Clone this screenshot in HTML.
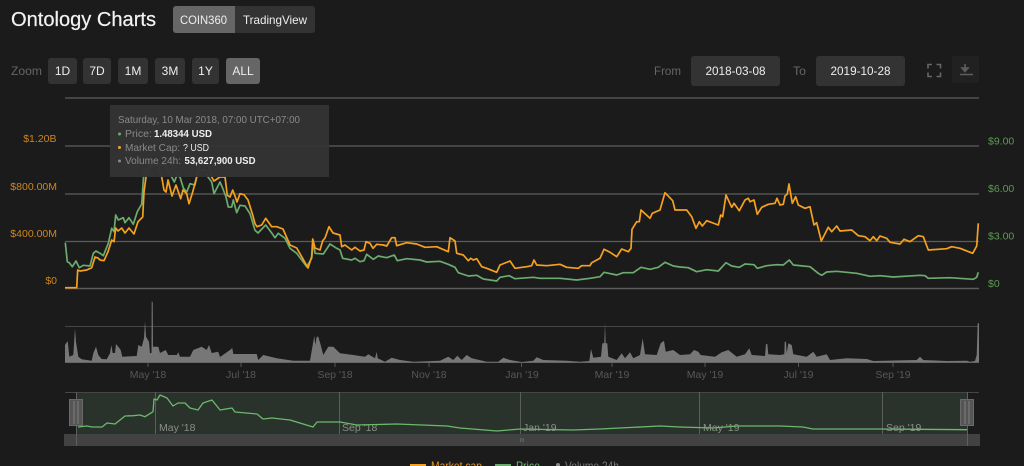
<!DOCTYPE html>
<html><head><meta charset="utf-8"><style>
html,body{margin:0;padding:0;background:#1b1b1b;width:1024px;height:466px;overflow:hidden}
svg{display:block;font-family:"Liberation Sans",sans-serif;filter:blur(.3px)}
</style></head><body>
<svg width="1024" height="466" viewBox="0 0 1024 466">
<rect width="1024" height="466" fill="#1b1b1b"/>
<text x="11" y="26" font-size="20" fill="#f2f2f2" stroke="#f2f2f2" stroke-width=".2" textLength="145" lengthAdjust="spacingAndGlyphs">Ontology Charts</text>
<rect x="173" y="6" width="142" height="27" rx="3" fill="#333"/>
<path d="M176 6h59v27h-59a3 3 0 0 1-3-3v-21a3 3 0 0 1 3-3z" fill="#666"/>
<g font-size="12" fill="#eee">
<text x="180" y="24" textLength="47" lengthAdjust="spacingAndGlyphs">COIN360</text>
<text x="243" y="24" textLength="64" lengthAdjust="spacingAndGlyphs">TradingView</text>
</g>
<text x="11" y="75" font-size="12" fill="#666" textLength="31" lengthAdjust="spacingAndGlyphs">Zoom</text>
<g fill="#333">
<rect x="48" y="58" width="29" height="26" rx="3"/><rect x="83" y="58" width="28" height="26" rx="3"/>
<rect x="118" y="58" width="30" height="26" rx="3"/><rect x="155" y="58" width="30" height="26" rx="3"/>
<rect x="192" y="58" width="27" height="26" rx="3"/><rect x="226" y="58" width="34" height="26" rx="3" fill="#666"/>
</g>
<g font-size="12" fill="#eee" text-anchor="middle">
<text x="62.500" y="75">1D</text><text x="97" y="75">7D</text><text x="133" y="75">1M</text>
<text x="170" y="75">3M</text><text x="205.500" y="75">1Y</text><text x="243" y="75">ALL</text>
</g>
<text x="654" y="75" font-size="12" fill="#666" textLength="27" lengthAdjust="spacingAndGlyphs">From</text>
<rect x="691" y="56" width="89" height="30" rx="3" fill="#333"/>
<text x="705.500" y="75" font-size="12" fill="#eee" textLength="60" lengthAdjust="spacingAndGlyphs">2018-03-08</text>
<text x="793" y="75" font-size="12" fill="#666" textLength="13" lengthAdjust="spacingAndGlyphs">To</text>
<rect x="816" y="56" width="89" height="30" rx="3" fill="#333"/>
<text x="830.500" y="75" font-size="12" fill="#eee" textLength="60" lengthAdjust="spacingAndGlyphs">2019-10-28</text>
<path d="M928 68.500v-4h4M936.500 64.500h4v4M928 72.500v4h4M936.500 76.500h4v-4" fill="none" stroke="#666" stroke-width="1.600"/>
<rect x="952" y="56" width="27" height="27" rx="2" fill="#212121"/>
<path d="M965 64v5.500M962 68h6l-3 3.500zM960 74.500h13" fill="#5c5c5c" stroke="#5c5c5c" stroke-width="1.600"/>

<g stroke="#5c5c5c" stroke-width="1.200">
<path d="M65 98H979M65 146H979M65 194H979M65 241.500H979"/>
</g>
<path d="M65 288.500H979" stroke="#5c5c5c" stroke-width="1.600"/>

<g font-size="10.500" fill="#cf851f" text-anchor="end">
<text x="56.500" y="142">$1.20B</text><text x="57" y="190">$800.00M</text>
<text x="57" y="237">$400.00M</text><text x="57" y="284">$0</text>
</g>
<g font-size="10.500" fill="#5a9c50">
<text x="988" y="144.500">$9.00</text><text x="988" y="192">$6.00</text>
<text x="988" y="239.500">$3.00</text><text x="988" y="287">$0</text>
</g>

<polyline fill="none" stroke="#6cab6e" stroke-width="1.700" stroke-linejoin="round" points="65.300,242.700 67.300,261.700 69.300,262.700 72.300,266.700 76,261 79.300,267.700 83.300,265.300 90,266 93.300,253.300 96,251 100,253.300 103.300,255.700 108.300,243.300 111.700,228.300 114,231.700 115.700,215 118.300,220 123.300,217.700 125,222.700 129,217.700 133.300,224.300 137.300,211.700 141.700,204 143.300,180 144.300,170 155,165 165,165 171.700,177 174.300,182 177,175 180,177 183.300,188 186.700,192 190,183.700 195,185 198,170 205,170 208,177 211.700,182 214,193.700 220,182 223,189 226,197 228.300,207 231.700,207 233.300,200 236.700,212.700 240,205.300 245,206 250,213.700 255,230.300 258,233 265.700,225 271.700,233 275,237.700 278.300,233.300 285,238.300 290,248.300 296.700,253.300 306.700,266.700 311.700,258.300 313.300,240.700 315,253.300 323.300,254 330,244 336.700,248.300 340,250 342.700,258.300 351.700,260 355,258.300 360,261.700 364,260.700 366.700,254.300 373.300,259.300 378.300,256 386.700,257.700 394.300,255 397.300,260.700 406.700,258.700 420,260 426.700,262 440,261.300 448.300,264.300 455,267.300 458.300,272.700 468.300,276 476.700,275.300 483.300,279 496.700,281 500,277.300 509.300,275.700 515,278.700 533.300,277.300 540,278.300 560,278.300 576.700,280 590,278.300 600,276.700 604,272.300 616.700,275 623.300,272.700 633.300,272.700 641,267.300 650,269.300 658.300,267.300 665,262.300 673.300,266 680,267 688.300,267.700 696.700,271.700 706.700,269.700 718.300,271 726,262.700 731.700,266 739.300,267.300 745,264 754,264.700 757.300,268.300 766.700,265.700 776.700,264.700 783.300,265 789.300,260 793.300,265 810,266.700 818.300,273.300 821.700,275.300 826.700,272 836.700,271.300 856.700,273.300 870,276.300 880,275.700 893.300,277 920,275.300 925,275.700 928.300,278.300 950,277.700 973.300,279.300 976.700,277.300 978.300,272.300"/>
<polyline fill="none" stroke="#f5a11f" stroke-width="1.700" stroke-linejoin="round" points="65,287.700 76.700,287.700 77.700,270 80,271 86.700,270 91.700,267.700 95,257 98,258 100,260 104,260.700 108,251.700 111.700,240 114,241.700 115.700,228 118,231 121.700,228 125,233 129,228 134,234 138,221.700 142.700,217 144,192 146,177 150,165 158,165 161.700,177 164,190 166,192 168,180 172,196 176,185 180.700,198.700 183,190 186.700,193.700 189,203.700 192.700,192 196.700,177 200,165 208,165 211.700,177 214,181 220,177 225,177 227.300,195.300 230,197 232.700,190 235,196 237,202 240,193.700 244,194.700 248,200 252.700,215 255,223.700 257,226.700 261.700,225 265.700,218.300 271.700,226.700 276.700,226.700 283,229 290,245 296.700,248 301.700,256.700 308,268 311.700,256.700 312.700,239 315,248 320,250 322.700,240.700 325,238 329,226.700 333,233 340,235 341.700,246.700 345,245 351.700,250 355,247.300 360,251 364,250 366,241.700 370,243.300 373,248.300 376.700,244.300 383.300,245 386.700,246 391.700,237.700 395,237.700 396.700,245.700 406.700,242.700 416.700,244 425,247.300 436.700,246.700 448.300,251.700 450,237.700 455,241 456.700,253.300 463.300,255 468.300,260.700 470.700,258.300 473.300,260 476.700,258.700 481.700,266.700 486.700,268.300 496.700,272.300 500,265 510,261 515,268.300 526.700,266.700 531.700,265.700 534,260 536.700,265 546.700,265.700 560,264.300 566.700,267.300 578.300,268.300 581.700,265.700 590,265.700 591.700,262.700 600,258.300 604,249.300 610,252.300 616.700,256.700 621.700,249 628.300,251.700 631,248.300 632,229.300 636.700,221.700 639.300,221.700 641,210 650,218.300 652.300,213.300 660,210 665,192.700 672.700,200.700 675,210 680,210 686.700,210 691.700,216.700 696,228.300 699.300,221.700 702.300,226 706.700,220.700 718.300,225 720.700,215 722.700,216.700 726,195 731.700,207.300 734,203.300 739.300,210.700 745,200 748.300,198.300 750,201.700 754,200 757.300,214.300 761.700,207.300 768.300,204.300 775,203.300 777,198.300 780,205 783.300,204.300 785,196 787.300,194 789,184 792.300,203.300 795.700,196.700 798.300,205 805,208.300 810,206.700 814,225 816.700,222.700 821.300,241 828.300,227.300 831.700,231.700 836.700,226 840,231 851.700,230 858.300,235.700 865,236.700 870,240.700 873.300,236.700 876.700,240.700 880,236 886.700,238.300 890,242.300 900,244 904,239.300 910,241.700 918.300,235.700 923.300,236.700 928.300,250 946.700,248.700 951.700,246.700 960,248.300 972.700,253.300 976.700,246 978.300,223.300"/>

<rect x="110" y="105" width="219" height="72" fill="#333" fill-opacity=".98"/>
<g font-size="10.500">
<text x="118" y="123" fill="#8a8a8a" textLength="182" lengthAdjust="spacingAndGlyphs">Saturday, 10 Mar 2018, 07:00 UTC+07:00</text>
<circle cx="119.500" cy="134" r="1.500" fill="#6cab6e"/><text x="125" y="137" fill="#8a8a8a">Price:</text>
<text x="154" y="137" fill="#eee" font-weight="bold" textLength="58" lengthAdjust="spacingAndGlyphs">1.48344 USD</text>
<circle cx="119.500" cy="147.500" r="1.500" fill="#f5a11f"/><text x="125" y="151" fill="#8a8a8a" textLength="55" lengthAdjust="spacingAndGlyphs">Market Cap:</text>
<text x="183" y="151" fill="#eee" textLength="26" lengthAdjust="spacingAndGlyphs">? USD</text>
<circle cx="119.500" cy="161" r="1.500" fill="#888"/><text x="125" y="164" fill="#8a8a8a" textLength="56" lengthAdjust="spacingAndGlyphs">Volume 24h:</text>
<text x="184.500" y="164" fill="#eee" font-weight="bold" textLength="71" lengthAdjust="spacingAndGlyphs">53,627,900 USD</text>
</g>

<path d="M65 326.500H979" stroke="#464646" stroke-width="1"/>
<polygon fill="#777" points="65,362.700 65,345 67.700,341 69.300,356.700 73.300,355 75,328.300 76,341.700 78.300,356.700 81.700,359.300 91.700,360.700 93.300,353.300 96,346.700 98.300,355 101.700,359 106.700,359.300 110,353.300 111.300,345 112.700,353 115,353 116,344 118.300,346.700 120.700,350 122.300,356.700 136.700,356 138.300,345 141.700,346.700 144,338.300 145,321 146,336.700 149,341.700 150,353 151.500,353 151.700,301.700 152.700,301.700 153,346.700 158.300,346.700 160,353 165.700,350 168.300,355 176.700,355 178.300,352.300 180,356.700 190,356.700 193.300,350 201.700,346.700 206.700,350 209,345 211.700,353 218.300,351.700 220,357 230,350 232.300,348 233.300,354 256.700,354 258.300,360 263.300,355 276.700,358.300 293.300,360.700 310,360.700 312.700,345 314.300,335.700 315.300,345 316.700,336.700 318.300,336.700 320.700,345 323.300,355 328.300,346.700 333.300,346.700 340,353.300 353.300,355 365,356.700 368.300,354.300 375,358.300 376.700,351.700 377.700,358.300 385,361.700 391.700,357.700 400,360 413.300,361.700 440,360.700 448.300,356.700 453.300,360 457.300,355.700 461.700,360 466.700,355 471.700,358.300 486.700,361.700 498.300,361.700 503.300,357.700 510,360 521.700,362 533.300,360.700 536.700,357.300 543.300,360 566.700,360.700 580,361.700 589.300,361 591,349 593.300,357.700 601,356.700 602.300,343.300 604.300,343.300 605,322.700 605.700,343.300 607.300,343.300 608.300,356.700 616.700,360 621.700,353.300 625,358.300 630,352.300 633.300,358.300 640,355 642.700,338.300 645,354.300 656.700,355 660.700,343.300 664,340.700 665.700,351.700 673.300,350 680,355 690,354.300 694,350 698.300,351.700 700.700,355 715,356.700 721.700,352.300 728.300,350 736.700,356.700 745,354.300 749.300,348.300 751.700,355 765,356 766,344 767.300,344 768.300,354.300 780,355 784.300,354.300 784.700,341.700 786,341.700 786.700,353.300 788.300,343.300 791.700,345 793.300,354.300 806.700,356.700 813.300,351.700 816.700,356.700 826.700,354.300 830,360 846.700,358.300 866.700,359 873.300,361 916.700,360 920,356.700 923.300,360 946.700,361 966.700,360.700 970,361.700 975,361 976.700,355 977.700,323.300 979,323.300 979,362.700"/>
<path d="M65 362.500H979" stroke="#666" stroke-width="1"/>
<path d="M148 363v4M241 363v4M335 363v4M429 363v4M521.500 363v4M612 363v4M705 363v4M798.500 363v4M893 363v4" stroke="#555"/>
<g font-size="10.500" fill="#55585c" text-anchor="middle">
<text x="148" y="378">May '18</text><text x="241" y="378">Jul '18</text><text x="335" y="378">Sep '18</text>
<text x="429" y="378">Nov '18</text><text x="522" y="378">Jan '19</text><text x="612" y="378">Mar '19</text>
<text x="705" y="378">May '19</text><text x="798.500" y="378">Jul '19</text><text x="893" y="378">Sep '19</text>
</g>

<rect x="76" y="392" width="891" height="42" fill="#2a332b"/>
<path d="M65 392.500H979" stroke="#464646"/>
<path d="M155.500 392v42M339.500 392v42M520.500 392v42M699.500 392v42M882.500 392v42" stroke="#5a5f5a"/>
<g font-size="10.500" fill="#8a8d88">
<text x="159" y="431">May '18</text><text x="342" y="431">Sep '18</text><text x="523" y="431">Jan '19</text>
<text x="703" y="431">May '19</text><text x="886" y="431">Sep '19</text>
</g>
<polyline fill="none" stroke="#6cb86c" stroke-width="1.300" stroke-linejoin="round" points="78,427 87,426 92,427 102,427 107,423 115,424 125,416 133,415.700 140,415 145,416.700 153,411.700 154,399 157,400 160,395 167,398 173,406 178,403 185,403 190,408 198,410 203,403 212,400 220,410 232,408 235,412 257,414 263,419 272,418 290,420 313,427 317,422 333,422 340,422 357,425 397,424 447,426 460,428 497,431 520,429 573,430 600,429 660,426 680,427 713,428 737,426 780,426 803,427 813,429 880,429 967,429.700"/>
<rect x="64" y="434" width="916" height="12" fill="#424242"/>
<path d="M520.500 438v4M522 438v4M523.500 438v4" stroke="#666" stroke-width=".8"/>
<path d="M76.500 392v54M967.500 392v54" stroke="#5f5f5f"/>
<g fill="#555" stroke="#6a6a6a">
<rect x="69.500" y="399.500" width="13" height="26"/><rect x="960.500" y="399.500" width="13" height="26"/>
</g>
<path d="M74 401v23M78 401v23M965 401v23M969 401v23" stroke="#808080"/>

<path d="M410 465h16" stroke="#f5a11f" stroke-width="2"/>
<text x="431" y="470" font-size="12" fill="#e8961f" textLength="51" lengthAdjust="spacingAndGlyphs">Market cap</text>
<path d="M495 465h16" stroke="#6cab6e" stroke-width="2"/>
<text x="516" y="470" font-size="12" fill="#6cb86c" textLength="24" lengthAdjust="spacingAndGlyphs">Price</text>
<circle cx="558" cy="465" r="2" fill="#888"/>
<text x="565" y="470" font-size="12" fill="#777" textLength="54" lengthAdjust="spacingAndGlyphs">Volume 24h</text>
</svg>
</body></html>
